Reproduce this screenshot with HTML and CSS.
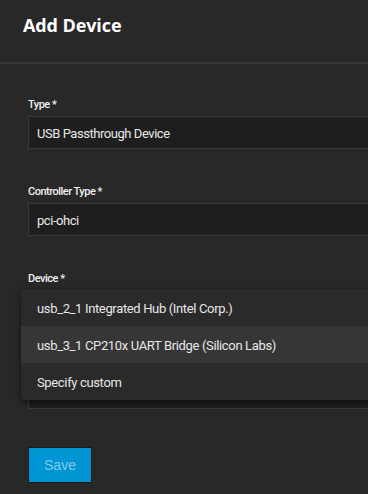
FILE: index.html
```html
<!DOCTYPE html>
<html>
<head>
<meta charset="utf-8">
<link rel="stylesheet" href="styles.css">
</head>
<body>
<div class="page">
  <header class="header">
    <h1 class="title">Add Device</h1>
  </header>
  <form class="form">
    <div class="field">
      <label class="label">Type <span class="req">*</span></label>
      <div class="input">USB Passthrough Device</div>
    </div>
    <div class="field">
      <label class="label">Controller Type <span class="req">*</span></label>
      <div class="input">pci-ohci</div>
    </div>
    <div class="field field-device">
      <label class="label">Device <span class="req">*</span></label>
      <div class="input input-device"></div>
      <div class="menu">
        <div class="option">usb_2_1 Integrated Hub (Intel Corp.)</div>
        <div class="option active">usb_3_1 CP210x UART Bridge (Silicon Labs)</div>
        <div class="option">Specify custom</div>
      </div>
    </div>
    <div class="actions">
      <button type="button" class="btn-save">Save</button>
    </div>
  </form>
</div>
</body>
</html>
```
FILE: styles.css
```css
* { box-sizing: border-box; }
html, body {
  margin: 0;
  padding: 0;
  background: #282828;
  overflow: hidden;
}
body {
  width: 368px;
  height: 494px;
  font-family: Roboto, "Liberation Sans", sans-serif;
  color: #e6e6e6;
}
.page { width: 368px; }
.header {
  height: 64px;
  padding: 13px 0 0 23px;
  border-bottom: 2px solid #383838;
}
.title {
  margin: 0;
  font-family: "Open Sans", Roboto, sans-serif;
  font-weight: 700;
  font-size: 18px;
  line-height: 24px;
  color: #ffffff;
  letter-spacing: -0.1px;
}
.form {
  padding: 34px 0 0 28px;
}
.field {
  position: relative;
  margin-bottom: 36px;
}
.label {
  display: block;
  font-size: 11px;
  line-height: 14px;
  font-weight: 500;
  color: #f0f0f0;
  margin-bottom: 4px;
  letter-spacing: -0.5px;
}
.input {
  width: 420px;
  height: 33px;
  background: #1e1e1e;
  border: 1px solid #3a3a3a;
  padding: 1px 0 0 8px;
  font-size: 13px;
  line-height: 32px;
  color: #e8e8e8;
  letter-spacing: -0.45px;
}
.input-device { height: 119px; }
.field-device { margin-bottom: 38px; }
.menu {
  position: absolute;
  left: -7px;
  top: 17px;
  width: 420px;
  background: #2a2a2a;
  border-radius: 4px;
  box-shadow: 0 2px 4px -1px rgba(0,0,0,0.3), 0 4px 5px 0 rgba(0,0,0,0.2), 0 1px 10px 0 rgba(0,0,0,0.15);
}
.option {
  height: 37px;
  padding: 1px 0 0 16px;
  font-size: 13px;
  line-height: 38px;
  color: #e6e6e6;
  letter-spacing: -0.35px;
}
.option.active { background: #363636; }
.btn-save {
  width: 64px;
  height: 36px;
  background: #0095d5;
  border: 1px solid #1a1a1a;
  color: rgba(255,255,255,0.5);
  font-family: "Liberation Sans", Arial, sans-serif;
  font-size: 14px;
  padding: 0;
  margin: 0;
}
```
